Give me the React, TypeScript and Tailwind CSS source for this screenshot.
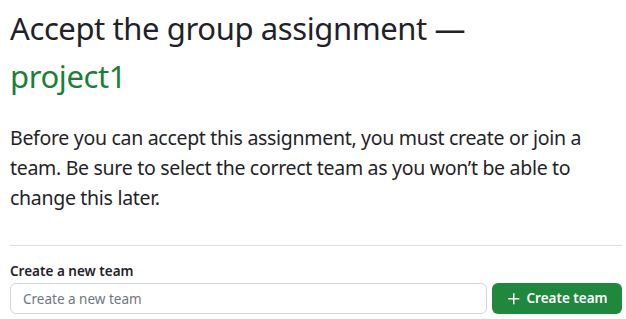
export default function App() {
  return (
    <div
      className="bg-white pl-[10px] pr-[4px] pt-[4px] text-[#1f2328]"
      style={{ fontFamily: '"Segoe UI", "Noto Sans", sans-serif' }}
    >
      <h1 className="text-[31px] leading-[48px] font-normal tracking-[-0.4px]">
        Accept the group assignment —
        <span className="block text-[#1a7f37]">project1</span>
      </h1>
      <p className="mt-[23px] text-[19.5px] leading-[30px] tracking-[-0.3px]">
        Before you can accept this assignment, you must create or join a team. Be sure to select the
        correct team as you won’t be able to change this later.
      </p>
      <hr className="mt-[32px] border-t border-[#d8dee4]" />
      <form className="mt-[15px]" onSubmit={(e) => e.preventDefault()}>
        <label className="block text-[13.5px] font-semibold leading-[20px]">Create a new team</label>
        <div className="mt-[2px] flex gap-[5px]">
          <input
            type="text"
            placeholder="Create a new team"
            className="h-[31px] flex-1 rounded-md border border-[#d0d7de] px-3 text-[13.5px] placeholder:text-[#6e7781] outline-none"
          />
          <button
            type="submit"
            className="flex h-[31px] w-[130px] items-center justify-center gap-1 rounded-md bg-[#1f883d] text-[13.5px] font-semibold text-white"
          >
            <svg width="16" height="16" viewBox="0 0 16 16" fill="currentColor">
              <path d="M7.75 2a.75.75 0 0 1 .75.75V7h4.25a.75.75 0 0 1 0 1.5H8.5v4.25a.75.75 0 0 1-1.5 0V8.5H2.75a.75.75 0 0 1 0-1.5H7V2.75A.75.75 0 0 1 7.75 2Z" />
            </svg>
            Create team
          </button>
        </div>
      </form>
    </div>
  );
}
